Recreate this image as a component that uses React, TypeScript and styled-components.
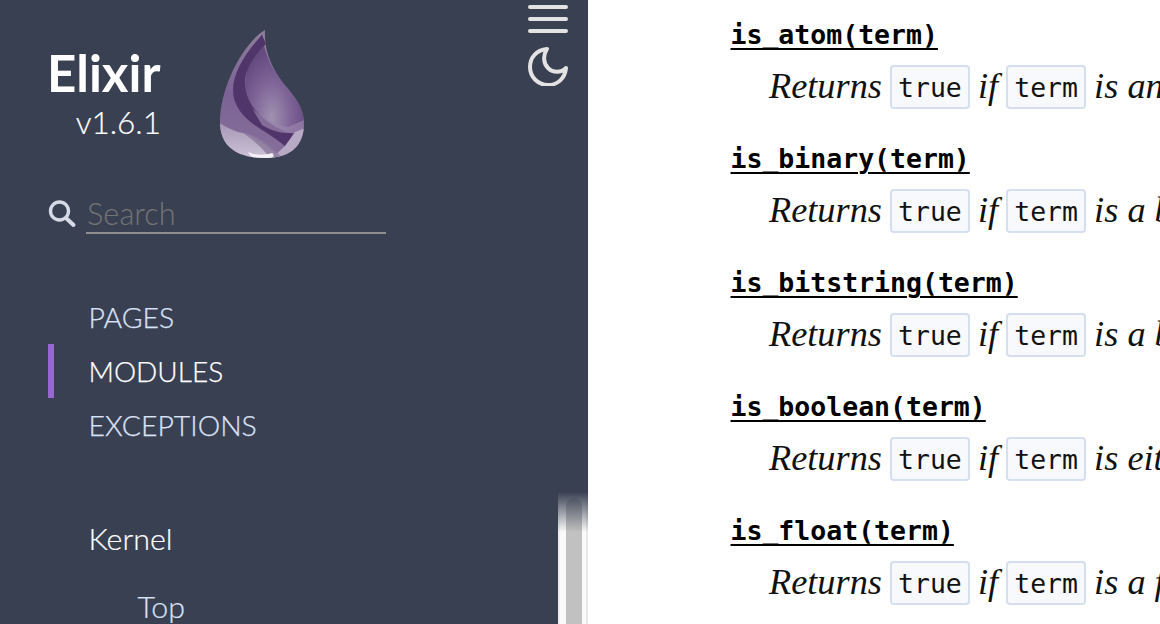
import React from "react";
import styled, { createGlobalStyle } from "styled-components";

const Global = createGlobalStyle`
  html, body { margin: 0; padding: 0; width: 1160px; height: 624px; overflow: hidden; background: #fff; }
  #root { width: 1160px; height: 624px; }
`;

const Page = styled.div`
  display: flex;
  width: 1160px;
  height: 624px;
  overflow: hidden;
`;

const Sidebar = styled.aside`
  position: relative;
  display: flex;
  flex: 0 0 588px;
  height: 624px;
  background: #394052;
  color: #fff;
  font-family: Lato, sans-serif;
`;

const SidebarBody = styled.div`
  flex: 0 0 558px;
  box-sizing: border-box;
  padding: 0 0 0 48px;
  height: 624px;
  overflow: hidden;
`;

const Brand = styled.div`
  display: flex;
  align-items: flex-start;
  height: 172px;
`;

const BrandText = styled.div`
  width: 112px;
  padding-top: 43px;
  text-align: right;
`;

const BrandName = styled.div`
  margin-left: -1px;
  font-size: 51px;
  font-weight: 700;
  line-height: 60px;
  text-align: left;
`;

const BrandVersion = styled.div`
  font-size: 31.5px;
  font-weight: 300;
  line-height: 40px;
  margin-right: -1px;
  margin-top: -1px;
  -webkit-text-stroke: 0.2px currentColor;
`;

const Logo = styled.svg`
  width: 90px;
  height: 132px;
  margin: 28px 0 0 57px;
`;

const SearchRow = styled.div`
  display: flex;
  align-items: flex-end;
  height: 62px;
`;

const SearchIcon = styled.svg`
  width: 30px;
  height: 30px;
  margin: 0 8px 6px -1px;
  color: #d5dae6;
`;

const SearchField = styled.div`
  width: 300px;
  height: 46px;
  box-sizing: border-box;
  padding-left: 1px;
  border-bottom: 2px solid #8f8f8f;
  font-size: 30.8px;
  font-weight: 300;
  line-height: 52px;
  color: #757575;
  margin-left: 1px;
`;

const TabList = styled.nav`
  margin-top: 56px;
`;

const Tab = styled.div<{ $active?: boolean }>`
  height: 54px;
  box-sizing: border-box;
  padding-left: 34.5px;
  border-left: 6px solid ${(p) => (p.$active ? "#9768d1" : "transparent")};
  font-size: ${(p) => (p.$active ? "28px" : "28.4px")};
  font-weight: 300;
  line-height: 54px;
  color: ${(p) => (p.$active ? "#fff" : "#dbe2f5")};
  -webkit-text-stroke: 0.25px currentColor;
`;

const Group = styled.div`
  margin: 59px 0 0 40.5px;
  font-size: 30.4px;
  font-weight: 300;
  line-height: 54px;
  color: #fff;
  -webkit-text-stroke: 0.2px currentColor;
`;

const SubItem = styled.div`
  margin: 21px 0 0 89.5px;
  font-size: 30.4px;
  font-weight: 300;
  line-height: 40px;
  color: #dbe2f5;
  -webkit-text-stroke: 0.2px currentColor;
`;

const Tools = styled.div`
  position: absolute;
  left: 528px;
  top: 5px;
  width: 40px;
  display: flex;
  flex-direction: column;
  align-items: center;
  color: #e3e3e3;
`;

const MenuIcon = styled.svg`
  display: block;
  width: 40px;
  height: 30px;
`;

const MoonIcon = styled.svg`
  display: block;
  width: 40px;
  height: 40px;
  margin-top: 11px;
`;

const Scroller = styled.div`
  position: relative;
  flex: 0 0 30px;
  display: flex;
  flex-direction: column;
  height: 624px;
`;

const Track = styled.div`
  display: flex;
  margin-top: 492px;
  flex: 1;
  box-sizing: border-box;
  padding: 6px 4px 0 6px;
  background: #fafafa;
  border-left: 2px solid #f0f0f0;
  border-right: 2px solid #e8e8e8;
`;

const Thumb = styled.div`
  width: 16px;
  border-radius: 8px 8px 0 0;
  background: #c1c1c1;
`;

const Fade = styled.div`
  position: absolute;
  left: 0;
  right: 0;
  top: 492px;
  height: 40px;
  background: linear-gradient(#394052, rgba(57, 64, 82, 0));
`;

const Content = styled.main`
  flex: 1;
  min-width: 0;
  box-sizing: border-box;
  padding: 15px 0 0 142.5px;
  overflow: hidden;
  white-space: nowrap;
`;

const Entry = styled.section`
  height: 124px;
`;

const EntryTitle = styled.a`
  display: block;
  width: max-content;
  height: 40px;
  font-family: "DejaVu Sans Mono", monospace;
  font-size: 26.5px;
  font-weight: 700;
  line-height: 40px;
  color: #000;
  text-decoration: underline;
  text-decoration-thickness: 2px;
  text-underline-offset: 4px;
`;

const Summary = styled.p`
  display: flex;
  align-items: center;
  gap: 8px;
  width: max-content;
  margin: 9px 0 0 38.5px;
  height: 44px;
  font-family: "Liberation Serif", serif;
  font-size: 36.3px;
  font-style: italic;
  color: #111;
`;

const Code = styled.code`
  display: block;
  flex: none;
  box-sizing: border-box;
  width: 80px;
  height: 44px;
  margin-top: 2px;
  text-align: center;
  background: #f7f9fc;
  border: 2px solid #d5dff0;
  border-radius: 4px;
  font-family: "DejaVu Sans Mono", monospace;
  font-size: 26.5px;
  font-style: normal;
  line-height: 42px;
  color: #111;
`;

const entries = [
  ["is_atom(term)", "is an atom"],
  ["is_binary(term)", "is a binary"],
  ["is_bitstring(term)", "is a bitstring"],
  ["is_boolean(term)", "is either true or false"],
  ["is_float(term)", "is a float"],
];

export default function App() {
  return (
    <Page>
      <Global />
      <Sidebar>
        <SidebarBody>
          <Brand>
            <BrandText>
              <BrandName>Elixir</BrandName>
              <BrandVersion>v1.6.1</BrandVersion>
            </BrandText>
            <Logo viewBox="217 28 90 132">
              <defs>
                <linearGradient id="dropBase" x1="0" y1="0" x2="0" y2="1">
                  <stop offset="0" stopColor="#8f7f9c" />
                  <stop offset="0.5" stopColor="#7c6396" />
                  <stop offset="1" stopColor="#86709a" />
                </linearGradient>
                <linearGradient id="dropLow" x1="0" y1="0" x2="0" y2="1">
                  <stop offset="0" stopColor="#a695b5" />
                  <stop offset="1" stopColor="#d0c7d9" />
                </linearGradient>
                <radialGradient id="dropSheen" cx="0.45" cy="0.75" r="0.6">
                  <stop offset="0" stopColor="#a091b0" />
                  <stop offset="0.55" stopColor="#7e6497" />
                  <stop offset="1" stopColor="#654a80" />
                </radialGradient>
                <clipPath id="dropClip">
                  <path d="M265 30C264 52 272 68 284 84C296 98 304 108 304 124C304 144 292 158 266 158C236 158 220 146 220 122C220 86 244 42 265 30Z" />
                </clipPath>
              </defs>
              <g clipPath="url(#dropClip)">
                <rect x="217" y="28" width="90" height="132" fill="url(#dropBase)" />
                <path d="M262 34C264 54 272 70 284 84C296 98 304 108 304 124L285 146L250 112C240 90 246 60 262 34Z" fill="url(#dropSheen)" />
                <path d="M262 35C246 52 233 72 233 90C233 108 246 120 262 130C272 136 280 142 285 146L295 134C282 132 270 124 260 115C250 106 244 92 245 80C246 68 255 54 266 44Z" fill="#50356a" />
                <path d="M252 108C262 118 274 124 288 127L304 120L303 132C290 134 276 134 262 125Z" fill="#9a86ad" opacity="0.7" />
                <path d="M218 122C228 128 236 132 243 133C254 136 268 146 280 158L218 162Z" fill="url(#dropLow)" />
                <path d="M285 146L295 132L306 128V160H270Z" fill="#b8aac4" />
                <path d="M243 133C256 134 272 146 284 160H272C264 150 254 140 243 133Z" fill="#8d7a9d" opacity="0.85" />
                <path d="M248 152C256 156 266 155 272 153C276 156 272 160 262 160C254 160 250 156 248 152Z" fill="#f4f1f6" />
              </g>
            </Logo>
          </Brand>
          <SearchRow>
            <SearchIcon viewBox="0 0 30 30" fill="none" stroke="currentColor">
              <circle cx="12.5" cy="13" r="9" strokeWidth="3.4" />
              <path d="M19 20l7.5 7" strokeWidth="4" strokeLinecap="round" />
            </SearchIcon>
            <SearchField>Search</SearchField>
          </SearchRow>
          <TabList>
            <Tab>PAGES</Tab>
            <Tab $active>MODULES</Tab>
            <Tab>EXCEPTIONS</Tab>
          </TabList>
          <Group>Kernel</Group>
          <SubItem>Top</SubItem>
        </SidebarBody>
        <Scroller>
          <Track>
            <Thumb />
          </Track>
          <Fade />
        </Scroller>
        <Tools>
          <MenuIcon viewBox="0 0 40 30" fill="none" stroke="currentColor" strokeWidth="4" strokeLinecap="round">
            <path d="M2 2h36M2 14h36M2 26h36" />
          </MenuIcon>
          <MoonIcon viewBox="0 0 40 40" fill="none" stroke="currentColor" strokeWidth="4" strokeLinejoin="round">
            <path d="M19 3C8 4 2 12 2 21C2 31 10 39 20 39C29 39 37 33 38 22C33 27 25 27 20 22C15 17 15 9 19 3Z" />
          </MoonIcon>
        </Tools>
      </Sidebar>
      <Content>
        {entries.map(([name, rest]) => (
          <Entry key={name}>
            <EntryTitle>{name}</EntryTitle>
            <Summary>
              <span>Returns</span>
              <Code>true</Code>
              <span>if</span>
              <Code>term</Code>
              <span>{rest}</span>
            </Summary>
          </Entry>
        ))}
      </Content>
    </Page>
  );
}
